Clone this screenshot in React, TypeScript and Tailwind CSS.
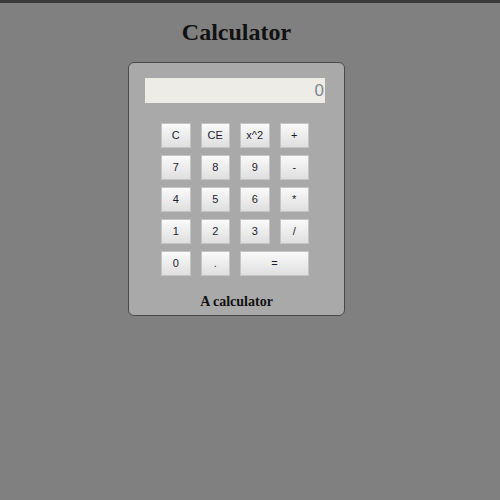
import React from "react";

const keys: { label: string; wide?: boolean }[] = [
  { label: "C" },
  { label: "CE" },
  { label: "x^2" },
  { label: "+" },
  { label: "7" },
  { label: "8" },
  { label: "9" },
  { label: "-" },
  { label: "4" },
  { label: "5" },
  { label: "6" },
  { label: "*" },
  { label: "1" },
  { label: "2" },
  { label: "3" },
  { label: "/" },
  { label: "0" },
  { label: "." },
  { label: "=", wide: true },
];

const App = () => {
  return (
    <div className="min-h-[500px] w-[500px] bg-[#808080] border-t-[3px] border-[#3a3a3a]">
      <div className="w-[473px] flex flex-col items-center">
        <h1
          className="mt-[15px] text-[24px] leading-[28px] font-bold text-[#111]"
          style={{ fontFamily: '"Liberation Serif", serif' }}
        >
          Calculator
        </h1>

        <div className="mt-[16px] w-[217px] h-[254px] bg-[#a9a9a9] border border-[#4a4a4a] rounded-[6px] pt-[15px] pl-[16px] flex flex-col">
          <div
            className="w-[180px] h-[25px] bg-[#edece6] flex items-center justify-end pr-[1px] text-[17px] text-[#808890]"
            style={{ fontFamily: '"Liberation Sans", sans-serif' }}
          >
            0
          </div>

          <div className="ml-[16px] mt-[20px] w-[148px] grid grid-cols-4 gap-x-[10px] gap-y-[7px]">
            {keys.map((k) => (
              <button
                key={k.label}
                className={`${k.wide ? "col-span-2" : ""} h-[25px] border border-[#c4c4c4] bg-gradient-to-b from-[#fafafa] to-[#dfdfdf] text-[11px] text-[#1c1c30] flex items-center justify-center`}
                style={{ fontFamily: '"Liberation Sans", sans-serif' }}
              >
                {k.label}
              </button>
            ))}
          </div>

          <div
            className="mt-[15px] -ml-[16px] w-[215px] text-center text-[14px] font-bold text-[#111]"
            style={{ fontFamily: '"Liberation Serif", serif' }}
          >
            A calculator
          </div>
        </div>
      </div>
    </div>
  );
};

export default App;
